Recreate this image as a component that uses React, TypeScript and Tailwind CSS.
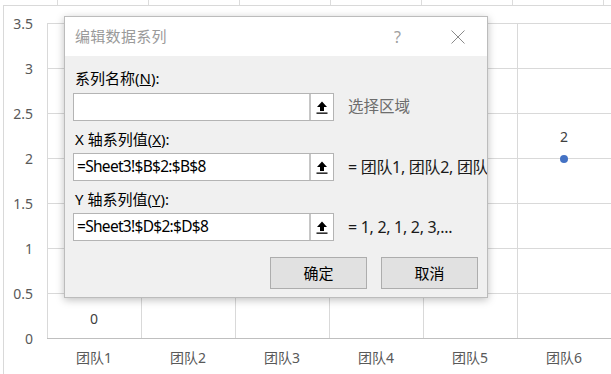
import React from 'react';

const font = "font-['Noto_Sans','Noto_Sans_CJK_SC',sans-serif]";

const yLabels = ['3.5', '3', '2.5', '2', '1.5', '1', '0.5', '0'];
const teams = ['团队1', '团队2', '团队3', '团队4', '团队5', '团队6'];

function PickButton() {
  return (
    <div className="w-[24px] h-full flex items-center justify-center bg-white border-l-2 border-[#c6c6c6]">
      <svg width="12" height="13" viewBox="0 0 12 13">
        <path d="M6 0.5 L11 6 L8 6 L8 10 L4 10 L4 6 L1 6 Z" fill="#000" />
        <rect x="0.5" y="11.5" width="11" height="1.3" fill="#000" />
      </svg>
    </div>
  );
}

function RangeInput({ value }: { value: string }) {
  return (
    <div className="w-[261px] h-[28px] shrink-0 flex border border-[#b4b4b4] bg-white">
      <div className="flex-1 flex items-center pl-[3px] text-[15.5px] text-black leading-none tracking-[-0.7px]">
        {value}
      </div>
      <PickButton />
    </div>
  );
}

export default function App() {
  return (
    <div className={`w-[611px] h-[374px] bg-white relative overflow-hidden ${font}`}>
      {/* spreadsheet cells peeking above the chart */}
      <div className="h-[5px] flex pl-[57px] gap-[90px]">
        {Array.from({ length: 7 }).map((_, i) => (
          <div key={i} className="w-px h-full bg-[#dcdcdc]" />
        ))}
      </div>

      {/* chart area */}
      <div className="ml-[3px] h-[369px] border-l border-t border-[#d9d9d9] flex pt-[17px]">
        <div className="w-[45px] flex flex-col mt-[-22px]">
          {yLabels.map((l) => (
            <div key={l} className="h-[45px] flex items-center justify-end pr-[14px] text-[14px] text-[#595959]">
              {l}
            </div>
          ))}
        </div>

        <div className="flex flex-col">
          <div className="relative grid grid-cols-[repeat(6,94px)] grid-rows-[repeat(7,45px)] border-b border-[#bfbfbf]">
            {Array.from({ length: 42 }).map((_, i) => (
              <div key={i} className="border-t border-l border-[#d9d9d9]" />
            ))}
            <div className="absolute left-[511px] top-[106px] w-[12px] text-center text-[14px] leading-[16px] text-[#404040]">2</div>
            <div className="absolute left-[513px] top-[132px] w-[8px] h-[8px] rounded-full bg-[#4472c4]" />
            <div className="absolute left-[41px] top-[288px] w-[12px] text-center text-[14px] leading-[16px] text-[#404040]">0</div>
          </div>
          <div className="flex pt-[11px]">
            {teams.map((t) => (
              <div key={t} className="w-[94px] text-center text-[14px] leading-[16px] text-[#595959]">
                {t}
              </div>
            ))}
          </div>
        </div>
      </div>

      {/* dialog */}
      <div className="absolute left-[64px] top-[16px] w-[424px] h-[282px] border border-[#bcbcbc] bg-[#f0f0f0] shadow-[0_2px_8px_rgba(0,0,0,0.25)] flex flex-col overflow-hidden">
        <div className="h-[39px] bg-white flex items-center pl-[10px] pr-[22px] shrink-0">
          <span className="text-[15px] text-[#9a9a9a] tracking-[0.3px]">编辑数据系列</span>
          <span className="ml-auto text-[16px] text-[#a0a0a0] mr-[50px]">?</span>
          <svg width="14" height="14" viewBox="0 0 14 14">
            <path d="M0.5 0.5 L13.5 13.5 M13.5 0.5 L0.5 13.5" stroke="#8a8a8a" strokeWidth="1" />
          </svg>
        </div>

        <div className="flex flex-col pl-[8px] pt-[13px]">
          <div className="pl-[2px] text-[15px] leading-[18px] text-black">
            系列名称(<span className="underline">N</span>):
          </div>
          <div className="flex items-center mt-[6px]">
            <RangeInput value="" />
            <span className="ml-[14px] text-[15.5px] text-[#6d6d6d]">选择区域</span>
          </div>

          <div className="pl-[2px] mt-[9px] text-[15px] leading-[18px] text-black">
            X 轴系列值(<span className="underline">X</span>):
          </div>
          <div className="flex items-center mt-[5px] whitespace-nowrap">
            <RangeInput value="=Sheet3!$B$2:$B$8" />
            <span className="ml-[14px] text-[16px] tracking-[-0.3px] text-[#1a1a1a]">= 团队1, 团队2, 团队3</span>
          </div>

          <div className="pl-[2px] mt-[9px] text-[15px] leading-[18px] text-black">
            Y 轴系列值(<span className="underline">Y</span>):
          </div>
          <div className="flex items-center mt-[5px] whitespace-nowrap">
            <RangeInput value="=Sheet3!$D$2:$D$8" />
            <span className="ml-[14px] text-[16px] tracking-[-0.3px] text-[#1a1a1a]">= 1, 2, 1, 2, 3,...</span>
          </div>

          <div className="flex justify-end gap-[14px] mt-[16px] pr-[9px]">
            <button className="w-[97px] h-[32px] bg-[#e1e1e1] border border-[#adadad] text-[15px] text-black">确定</button>
            <button className="w-[97px] h-[32px] bg-[#e1e1e1] border border-[#adadad] text-[15px] text-black">取消</button>
          </div>
        </div>
      </div>
    </div>
  );
}
